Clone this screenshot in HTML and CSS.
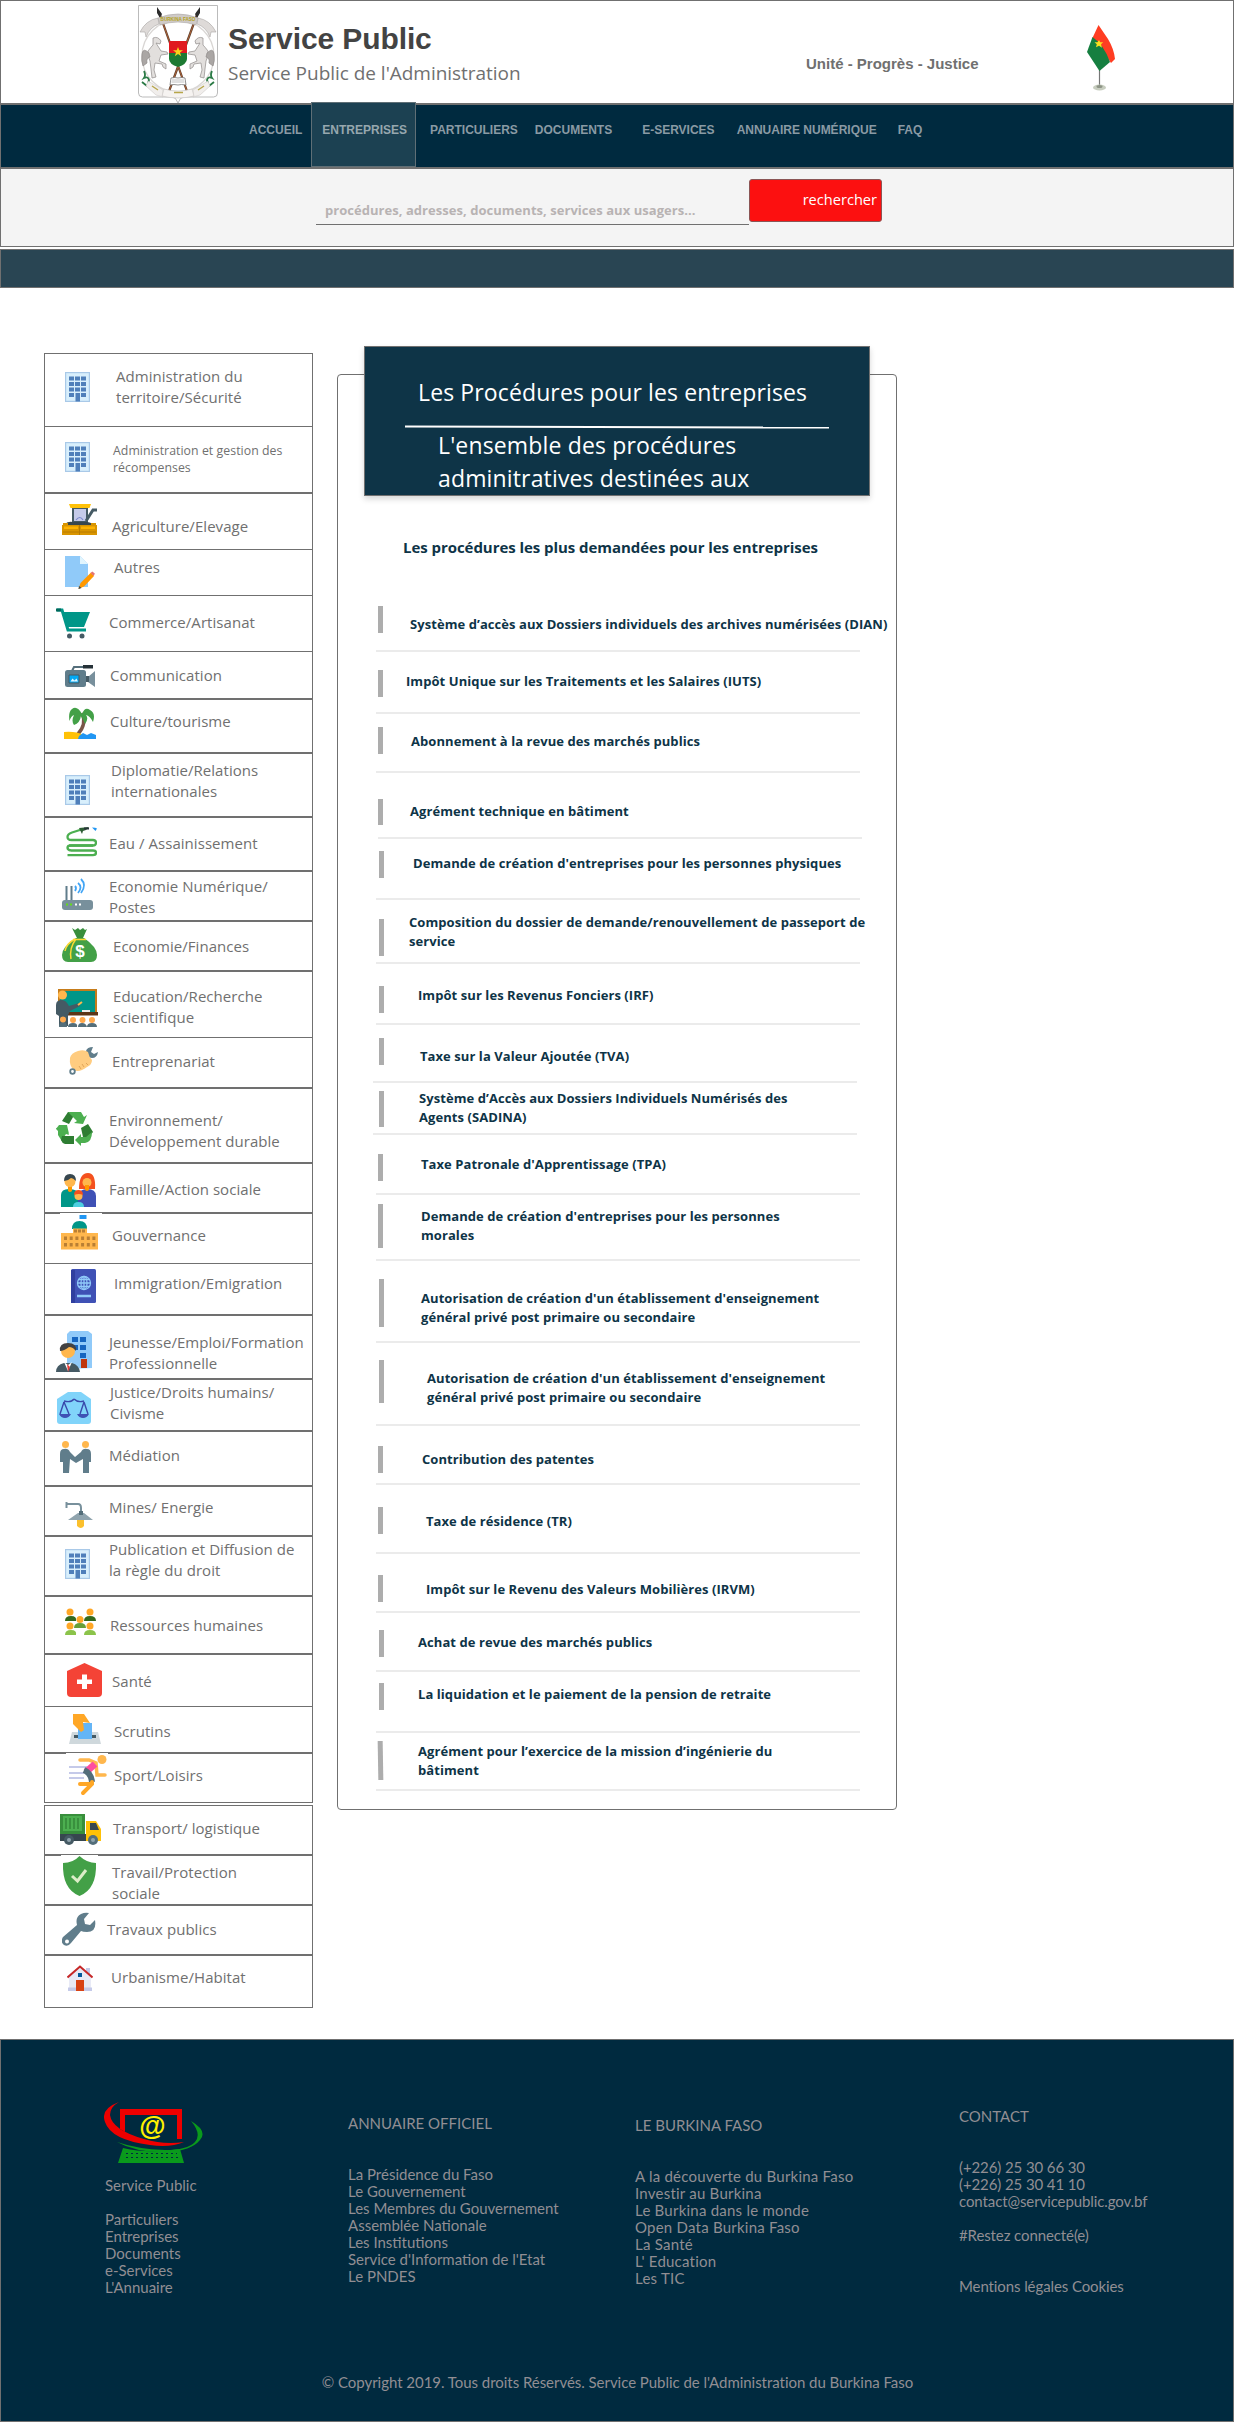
FILE: index.html
```html
<!DOCTYPE html>
<html lang="fr">
<head>
<meta charset="utf-8">
<title>Service Public - Les procédures pour les entreprises</title>
<link rel="stylesheet" href="styles.css">
</head>
<body>
<svg class="sprite" width="0" height="0" aria-hidden="true">
  <symbol id="building" viewBox="0 0 25 30">
    <path d="M0 0h25v30H0z" fill="#a9c9e8"/><path d="M1.2 1.2h22.6v27.6H1.2z" fill="#d8effc"/>
    <path d="M4 4.500h5v4H4zm6 0h5v4h-5zm6 0h5v4h-5zM4 10h5v4H4zm6 0h5v4h-5zm6 0h5v4h-5zM4 15.500h5v4H4zm6 0h5v4h-5zm6 0h5v4h-5zM4 21h5v4H4zm12 0h5v4h-5zM10.500 21h4.500v8.500h-4.500z" fill="#4f7fba"/>
  </symbol>
</svg>

<header class="masthead">
  <svg class="emblem" width="80" height="99" viewBox="0 0 80 99">
    <path d="M.5 .5h79V88q0 4-4 4H46q-4 0-6 6-2-6-6-6H4.500q-4 0-4-4z" fill="#fff" stroke="#a9a9a9" stroke-width=".8"/>
    <circle cx="40" cy="51" r="36" fill="none" stroke="#d9d6d4" stroke-width="1.200"/>
    <path d="M21 7 50 89M60 7 30 89" stroke="#5a3f2d" stroke-width="2.200"/>
    <path d="M21 7 50 89M60 7 30 89" stroke="#c2683a" stroke-width=".8"/>
    <path d="m19 2 5 7-2 4-3-5zM62 2l-5 7 2 4 3-5z" fill="#2c2c2c"/>
    <path d="M2 27q6-12 18-14l1 6Q12 22 8 32l-1-5zM78 27q-6-12-18-14l-1 6q9 3 13 13l1-5z" fill="#dedad8" stroke="#aaa6a4" stroke-width=".6"/>
    <path d="M20 13q20-8 40 0l-2 7q-18-6-36 0z" fill="#cfcac7" stroke="#aaa6a4" stroke-width=".6"/>
    <text class="motto" x="40" y="15.500">BURKINA FASO</text>
    <g id="horse" fill="#e2dfdd" stroke="#8f8b89" stroke-width=".7">
      <path d="M15 33q5-2 8 3l-1 3-4-1 5 8 6 1 1 2-7 1-2 6 7 3v5l-3-2-1-3-7-1-1 7 2 7-4 1-1-9-1-8q-3-5-2-10 3-4 5-6z"/>
      <path d="M11 48q-6-6-7 1t1 12l4-3q-1-5 3-6z" fill="#aaa6a4"/>
    </g>
    <use href="#horse" transform="matrix(-1 0 0 1 80 0)"/>
    <path d="M31 36h18v12H31z" fill="#e01a1f"/><path d="M31 48h18v6q0 5-9 8-9-3-9-8z" fill="#1d7a33"/>
    <path d="m40 42 1.300 3.200h3.700l-3 2.300 1.200 3.700-3.200-2.200-3.200 2.200 1.200-3.700-3-2.300h3.700z" fill="#f9d21b"/>
    <path d="M33 73q4-1 7 0 4-1 7 0l1 7q-5-1-8 0-4-1-8 0z" fill="#fff" stroke="#777" stroke-width=".8"/>
    <path d="M34 75h12M33.500 77h13" stroke="#999" stroke-width=".6"/>
    <path d="M6 66q2 4 0 7 4-2 5 2-2 4 1 8M4 77l5 4M74 66q-2 4 0 7-4-2-5 2 2 4-1 8M76 77l-5 4" fill="none" stroke="#2a7a45" stroke-width="1.800"/>
    <path d="m10 76 15 9v7l-7-2L8 81zM70 76l-15 9v7l7-2 10-9z" fill="#f1eeec" stroke="#c5c1bf" stroke-width=".5"/>
    <path d="M26 84q14 4 28 0l2 7q-16 4-32 0z" fill="#f6f3f1" stroke="#c5c1bf" stroke-width=".6"/>
    <path d="m14 81 6 4M36 87.500h9M66 81l-6 4" stroke="#b7a64a" stroke-width="1.400"/>
  </svg>
  <div class="identity">
    <h1>Service Public</h1>
    <p>Service Public de l'Administration</p>
  </div>
  <p class="devise">Unité - Progrès - Justice</p>
  <svg class="flag" width="30" height="68" viewBox="0 0 30 68">
    <path d="M13.500 44v18" stroke="#777" stroke-width="1.200"/><path d="M12.500 1 6 15q9 8 19 24l4-4q-1-10-7-20z" fill="#ff3d22"/>
    <path d="M6.500 13 1 28l12.500 19L24 38Q18 21 6.500 13z" fill="#157f40"/>
    <path d="m13 16 1.200 2.300h3l-2.200 2 1 3.500-3-2-3 1.500.8-3-2.300-2h3z" fill="#fbe01d"/>
    <ellipse cx="13.500" cy="63.500" rx="6.500" ry="3" fill="#c7cdbf"/><ellipse cx="13.500" cy="62.500" rx="3" ry="1.500" fill="#8d9486"/>
  </svg>
</header>

<nav class="menu">
  <a>ACCUEIL</a>
  <a class="active">ENTREPRISES</a>
  <a class="particuliers">PARTICULIERS</a>
  <a class="documents">DOCUMENTS</a>
  <a class="eservices">E-SERVICES</a>
  <a class="annuaire">ANNUAIRE NUMÉRIQUE</a>
  <a class="faq">FAQ</a>
</nav>

<section class="search">
  <div class="field">procédures, adresses, documents, services aux usagers...</div>
  <div class="submit">rechercher</div>
</section>
<div class="strip"></div>

<main>
  <aside>
    <ul class="cats">
      <li class="admin"><svg width="25" height="30"><use href="#building"/></svg><span>Administration du<br>territoire/Sécurité</span></li>
      <li class="awards thick"><svg width="25" height="30"><use href="#building"/></svg><span>Administration et gestion des<br>récompenses</span></li>
      <li class="farming"><svg width="35" height="31" viewBox="0 0 35 31"><path d="M11 4v14h14V4z" fill="#c5cae9" stroke="#455a64" stroke-width="2"/><path d="M7 0h22l-1.500 4h-19z" fill="#ffc107"/><path d="m24 17 7-11h4" fill="none" stroke="#455a64" stroke-width="3"/><path d="M3 20q3-3 8-2h13q6 0 8 4H3z" fill="#37474f"/><path d="M14 16q4-5 7 0" fill="none" stroke="#7986cb" stroke-width="1.200"/><path d="M1 19h5v4H1zM29 19h5v4h-5zM0 21h35v10H0z" fill="#d99500"/><path d="M2 22.500h14v2.500H2zm17 0h14v2.500H19z" fill="#ffb300"/><path d="M1 28h33M17.500 21v10" stroke="#b87b00" stroke-width="1"/></svg><span>Agriculture/Elevage</span></li>
      <li class="others"><svg width="32" height="34" viewBox="0 0 32 34"><path d="M1 1h15l8 8v23H1z" fill="#90caf9"/><path d="M16 1v8h8z" fill="#e1f5fe"/><path d="M27 17.500 30 21 20 31.500l-5.500 2.500 2-6z" fill="#ff9800"/><path d="m26.500 18 3.300 3 1-2.500-2.500-2z" fill="#e57373"/><path d="m15 31-.5 3 3-1z" fill="#37474f"/></svg><span>Autres</span></li>
      <li class="trade"><svg width="35" height="31" viewBox="0 0 35 31"><path d="M1 2h5l6 20h18" fill="none" stroke="#009688" stroke-width="3"/><path d="M7 4h27l-6 15H12z" fill="#009688"/><path d="M0 .5h5v3H0z" fill="#00695c"/><circle cx="13.500" cy="28" r="2.500" fill="#455a64"/><circle cx="26" cy="28" r="2.500" fill="#455a64"/></svg><span>Commerce/Artisanat</span></li>
      <li class="media thick"><svg width="30" height="22" viewBox="0 0 30 22"><path d="m7 6 2-4h12" fill="none" stroke="#546e7a" stroke-width="2"/><path d="M18 0h10v3.500H18z" fill="#263238"/><rect y="5" width="21" height="17" rx="2.500" fill="#607d8b"/><path d="M21 12h2l7-6v16l-7-5h-2z" fill="#78909c"/><path d="M21 11h3v6h-3z" fill="#455a64"/><path d="M4 10h10v8H4z" fill="#03a9f4" stroke="#455a64"/><path d="m5.500 16.500 2-3 2 2 2-2 1.500 3z" fill="#e1f5fe"/></svg><span>Communication</span></li>
      <li class="tourism thick"><svg width="32" height="32" viewBox="0 0 32 32"><path d="M14 27q9-10 4-21" fill="none" stroke="#795548" stroke-width="3.500"/><path d="M18 7Q13-2 8 2 4 5 5.500 14 7 9 10 8q-3 6 0 10 6-2 7-9 3 5 4 8 4-5 1-9 4 1 7 7 3-9-3-12-5-4-8 4z" fill="#43a047"/><path d="M0 25q12-1 19 3l2 4H0z" fill="#ffc107"/><path d="m15 29 4-3 4 2 4-2 5 2v4H14z" fill="#2196f3"/></svg><span>Culture/tourisme</span></li>
      <li class="diplomacy thick"><svg width="25" height="30"><use href="#building"/></svg><span>Diplomatie/Relations<br>internationales</span></li>
      <li class="water thick"><svg width="31" height="31" viewBox="0 0 31 31"><path d="M17 3 6 6.500Q1.500 8 1.500 11t4 3H27q3 0 3 2.700T27 19.500H5q-3.500 0-3.500 2.200T5 24.500" fill="none" stroke="#4caf50" stroke-width="2.300"/><path d="M3 19.500h24M5 24.500h22q3 0 3 2.300t-3 2.300H1.500" fill="none" stroke="#4caf50" stroke-width="2.300"/><path d="m13 2 10-1-3 3-3 1-1 3z" fill="#2e5d35"/><path d="M18 1.500h5v2h-5z" fill="#263238"/><path d="M26 1.500q4 0 5 1L29.500 5z" fill="#2196f3"/></svg><span>Eau / Assainissement</span></li>
      <li class="digital thick"><svg width="31" height="32" viewBox="0 0 31 32"><path d="M4.500 8v15M9.500 8v15" stroke="#607d8b" stroke-width="2"/><path d="M13 8q2 2 0 5M16 5q5 4 0 10M19 1q6 6 0 14" fill="none" stroke="#42a5f5" stroke-width="1.800"/><rect y="22" width="31" height="10" rx="3" fill="#78909c"/><path d="M4 26.500h2m2 0h2" stroke="#64dd17" stroke-width="2"/><path d="M13 26.500h2m2 0h2" stroke="#fff" stroke-width="2"/></svg><span>Economie Numérique/<br>Postes</span></li>
      <li class="finance thick"><svg width="35" height="34" viewBox="0 0 35 34"><path d="m10 0 3 2 3-2 2 2 3-2 2 2 2-1-4 9h-6z" fill="#388e3c"/><path d="M14 10h8q13 9 13 17 0 7-6 7H6q-6 0-6-7 0-8 14-17z" fill="#43a047"/><path d="M11 11.500h13M13 11Q4 16 3 23m11-12q-7 9-5 20" fill="none" stroke="#fdd835" stroke-width="1.500"/><text x="18" y="29" class="dollar">$</text></svg><span>Economie/Finances</span></li>
      <li class="school"><svg width="42" height="38" viewBox="0 0 42 38"><path d="M3 1h37v24H3z" fill="#009688" stroke="#c67c1a" stroke-width="2"/><path d="M10 23h32v3.500H10z" fill="#5d3517"/><path d="M26 21h8v2h-8z" fill="#eee"/><circle cx="6.500" cy="6" r="4.500" fill="#ffb74d"/><path d="M3 37V27l-3-2v-9q0-5 6-5 4 0 7 6l10-3 1 3-10 5-2 4v11z" fill="#455a64"/><path d="M22 16l4-3" stroke="#ffb74d" stroke-width="2"/><path d="M3 38q0-5 4-5t4 5zm9 0q0-4 5-4t4 4zm10 0q0-4 4-4t5 4zm9 0q0-4 5-4t5 4z" fill="#546e7a"/><g fill="#ffa94d"><circle cx="7" cy="30.500" r="3"/><circle cx="17" cy="31" r="3"/><circle cx="26.500" cy="31" r="3"/><circle cx="36" cy="31" r="3"/></g></svg><span>Education/Recherche<br>scientifique</span></li>
      <li class="business thick"><svg width="29" height="29" viewBox="0 0 29 29"><path d="m4 25 18-18" stroke="#607d8b" stroke-width="3"/><path d="M24 1q-6 0-7 4 0 7 6 7 5 0 6-6l-4 2-3-2z" fill="#607d8b"/><path d="M1 12q1-5 8-7 6-2 10 1 1 5 4 8 0 5-5 7-8 6-13 3-5-4-4-12z" fill="#ffcc80"/><path d="m10 20 2 3m1-5 2 3m2-4 2 2" stroke="#e0a458" stroke-width="1"/><circle cx="3.500" cy="25.500" r="2.300" fill="#fff" stroke="#607d8b" stroke-width="1.800"/></svg><span>Entreprenariat</span></li>
      <li class="green thick"><svg width="37" height="34" viewBox="0 0 37 34"><path d="M12 0h8l-7 12-7-3z" fill="#2e7d32"/><path d="M12 0h13l3 5 3-2-4 9-9-1 3-2z" fill="#4caf50"/><path d="m7 31-5-8 0-4-2-3 9-1 4 8-3-1-4 6z" fill="#4caf50"/><path d="M6 24h12v8H9q-3-1-4-4z" fill="#2e7d32"/><path d="m25 16 7-4 5 8-4 5h-6z" fill="#2e7d32"/><path d="M36 20q0 10-7 11h-4v3l-6-6 6-6v3h5z" fill="#4caf50"/><path d="M0 17l3-4 8 0 2 9-4-2-2 3z" fill="#4caf50"/></svg><span>Environnement/<br>Développement durable</span></li>
      <li class="family thick"><svg width="35" height="34" viewBox="0 0 35 34"><path d="M0 34V22q0-6 8-6 9 0 10 6v12z" fill="#009688"/><path d="M17 34V22q2-6 9-6 9 0 9 7v11z" fill="#3f51b5"/><path d="M18 16q0-16 9-16 8 0 7 16z" fill="#f4511e"/><circle cx="26" cy="9.500" r="4.500" fill="#ffb74d"/><path d="M24 12h4v5q-2 2-4 0zM7 12h4v6q-2 2-4 0z" fill="#ff9800"/><circle cx="9" cy="8.500" r="5.500" fill="#ffb74d"/><path d="M3 8q0-7 6-7t6 7q-3-3-5-3-3 3-7 3z" fill="#37474f"/><circle cx="17.500" cy="23" r="4" fill="#ffb74d"/><path d="M13 22q0-5 4.500-5t4.500 5q-4-2-9 0z" fill="#f4511e"/><path d="M12 34q0-5 5.500-5t5.500 5z" fill="#4dd0e1"/></svg><span>Famille/Action sociale</span></li>
      <li class="government"><svg width="42" height="37" viewBox="0 0 42 37"><path d="M0 0h42v37H0z" fill="#fff"/><path d="M19.500 2h7v4h-7z" fill="#2196f3"/><path d="M12 16q0-8 7.500-8t7.500 8z" fill="#009688"/><path d="M13 15.500h14V21H13zM1 20h37v16.500H1z" fill="#ffb74d"/><path d="M14 16.500h3v3h-3zm4 0h3v3h-3zm4 0h3v3h-3zM4 23.500h3v3.500H4zm5.700 0h3v3.500h-3zm5.700 0h3v3.500h-3zm5.700 0h3v3.500h-3zm5.700 0h3v3.500h-3zm5.600 0h3v3.500h-3zM4 30h3v3.500H4zm5.700 0h3v3.500h-3zm5.700 0h3v3.500h-3zm5.700 0h3v3.500h-3zm5.700 0h3v3.500h-3zm5.600 0h3v3.500h-3z" fill="#b97f34"/></svg><span>Gouvernance</span></li>
      <li class="migration thick"><svg width="25" height="34" viewBox="0 0 25 34"><rect width="25" height="34" rx="1.500" fill="#3f51b5"/><path d="M0 1h4v33H0z" fill="#303f9f"/><g fill="none" stroke="#90caf9" stroke-width="1.300"><circle cx="13" cy="14" r="6.500"/><ellipse cx="13" cy="14" rx="3" ry="6.500"/><path d="M6.500 14h13M13 7.500v13M7.500 10.500h11M7.500 17.500h11"/></g><path d="M6 27h14" stroke="#90caf9" stroke-width="2.500"/></svg><span>Immigration/Emigration</span></li>
      <li class="jobs thick"><svg width="36" height="41" viewBox="0 0 36 41"><path d="M11 38V3l3-3h18l4 3v34z" fill="#90caf9"/><path d="M16 6h6v5h-6zm8 0h6v5h-6zm-8 8h6v5h-6zm8 0h6v5h-6zm0 8h6v5h-6z" fill="#1565c0"/><path d="M25 28h6v9h-6z" fill="#bf360c"/><circle cx="12" cy="20" r="7" fill="#ffb74d"/><path d="M4 20q-1-8 8-8t8 8q-3-4-7-4-5 4-9 4z" fill="#424242"/><path d="M0 41q0-7 8-9h8q7 2 8 9z" fill="#455a64"/><path d="m8 31 4 9 4-9-4 3z" fill="#fff"/><path d="m11 33 1 8 2-5z" fill="#e53935"/></svg><span>Jeunesse/Emploi/Formation<br>Professionnelle</span></li>
      <li class="justice thick"><svg width="34" height="32" viewBox="0 0 34 32"><path d="M0 7 11 0h13l10 7v22q0 3-3 3H3q-3 0-3-3z" fill="#81d4fa"/><path d="M17 7q-3 4-10 2M17 7q4 4 10 2M7 10 3 22m4-12 5 12M27 10l-4 12m4-12 4 12" fill="none" stroke="#3949ab" stroke-width="1.400"/><path d="M2 22h12q-2 4-6 4t-6-4zm18 0h12q-2 4-6 4t-6-4z" fill="#3f51b5"/></svg><span>Justice/Droits humains/<br>Civisme</span></li>
      <li class="mediation thick"><svg width="31" height="32" viewBox="0 0 31 32"><circle cx="5.500" cy="3.500" r="3.500" fill="#ffb74d"/><circle cx="25.500" cy="3.500" r="3.500" fill="#ffb74d"/><path d="M0 21v-8q0-5 4-5 4-1 6 3l5 5 6-5q2-4 6-3 4 0 4 5v8h-2v11h-6V18l-7 4-6-4-1 14H3V21z" fill="#607d8b"/></svg><span>Médiation</span></li>
      <li class="energy thick"><svg width="28" height="27" viewBox="0 0 28 27"><path d="M1.500 0v6M1 2h12q3 0 3 4v5" fill="none" stroke="#78909c" stroke-width="2"/><path d="M13 11h6l9 7H3z" fill="#90a4ae"/><path d="M14 9h4v4h-4z" fill="#546e7a"/><path d="M12 18h7v6q-3 4-7 0z" fill="#fbc02d"/></svg><span>Mines/ Energie</span></li>
      <li class="publishing thick"><svg width="25" height="30"><use href="#building"/></svg><span>Publication et Diffusion de<br>la règle du droit</span></li>
      <li class="staff thick"><svg width="32" height="28" viewBox="0 0 32 28"><path d="M1 13q0-5 6-5t5 5zM20 13q0-5 6-5t6 5z" fill="#33691e"/><path d="M10 20q0-5 6-5t6 5z" fill="#689f38"/><path d="M1 27q0-5 6-5t5 5zM20 27q0-5 6-5t6 5z" fill="#8bc34a"/><g fill="#ffa726"><circle cx="6" cy="4" r="3.500"/><circle cx="26" cy="4" r="3.500"/><circle cx="16" cy="11.500" r="3.500"/><circle cx="6" cy="18" r="3.500"/><circle cx="26" cy="18" r="3.500"/></g></svg><span>Ressources humaines</span></li>
      <li class="health"><svg width="35" height="34" viewBox="0 0 35 34"><path d="M0 8 17.500 0 35 8v22q0 4-4 4H4q-4 0-4-4z" fill="#f44336"/><path d="M15 11.500h5v5h5v4.500h-5v5h-5v-5h-5v-4.500h5z" fill="#fff"/></svg><span>Santé</span></li>
      <li class="voting thick"><svg width="32" height="30" viewBox="0 0 32 30"><path d="M3 18h26l3 12H0z" fill="#cfd8dc"/><path d="M5 21h22v3H5z" fill="#455a64"/><path d="M9 9h14v16H9z" fill="#64b5f6"/><path d="M4 0h11l6 9-7-1 1 8-3 2-8-8z" fill="#ffa726"/></svg><span>Scrutins</span></li>
      <li class="sport"><svg width="42" height="43" viewBox="0 0 42 43"><path d="M0 0h42v43H0z" fill="#fff"/><path d="M3 14h18M3 20h15M3 25h15" stroke="#c5cae9" stroke-width="1.800"/><path d="M14 7h9l7 3 1 12h8" fill="none" stroke="#ffb74d" stroke-width="3.500" stroke-linecap="round"/><circle cx="36" cy="6.500" r="4.500" fill="#ffb74d"/><path d="m20 19 9-8" stroke="#ff4da0" stroke-width="7"/><path d="M18 17q7 3 8 12" fill="none" stroke="#546e7a" stroke-width="6"/><path d="M26 29v2l-9 9m8-9H14" fill="none" stroke="#ffa726" stroke-width="4" stroke-linecap="round"/></svg><span>Sport/Loisirs</span></li>
    </ul>
    <ul class="cats">
      <li class="transport thick"><svg width="42" height="33" viewBox="0 0 42 33"><path d="M0 22h28v7H0z" fill="#37474f"/><path d="M0 2h25v20H0z" fill="#388e3c"/><path d="M3 4h19v15H3z" fill="#4caf50"/><path d="M6 6v11m4-11v11m4-11v11m4-11v11" stroke="#2e7d32" stroke-width="1.200"/><path d="M26 29V9h10l5 8v12z" fill="#ffc107"/><path d="M30 11h6l3 7h-9z" fill="#37474f"/><circle cx="9" cy="28" r="5" fill="#455a64"/><circle cx="9" cy="28" r="2" fill="#90a4ae"/><circle cx="33" cy="28" r="5" fill="#546e7a"/><circle cx="33" cy="28" r="2" fill="#90a4ae"/></svg><span>Transport/ logistique</span></li>
      <li class="labour thick"><svg width="37" height="41" viewBox="0 0 37 41"><path d="M0 0h37v41H0z" fill="#fff"/><path d="M2 8q10 0 16.500-7Q26 8 35 8q1 26-16.500 33Q1 34 2 8z" fill="#43a047"/><path d="m11 21 5.500 5L25 15" fill="none" stroke="#dcedc8" stroke-width="3"/></svg><span>Travail/Protection<br>sociale</span></li>
      <li class="works thick"><svg width="34" height="34" viewBox="0 0 34 34"><path d="M27 1 22 7l1 5 5 1 5-5q2 12-8 12-4 0-6-1L9 31q-3 4-7 2-4-3-1-8l14-12Q13 5 19 2q4-2 8-1z" fill="#607d8b"/><circle cx="5" cy="29.500" r="2" fill="#fff"/></svg><span>Travaux publics</span></li>
      <li class="housing"><svg width="26" height="26" viewBox="0 0 26 26"><path d="M19 3h4v8h-4z" fill="#c5cae9"/><path d="M2 12 13 2l11 10v14H2z" fill="#e8eaf6"/><path d="M1 22.500h24V26H1z" fill="#c5cae9"/><path d="m.5 12.500 12.500-11 12.500 11" fill="none" stroke="#c62828" stroke-width="2"/><path d="M11 8h4v4h-4z" fill="#01579b"/><path d="M9 15h8v11H9z" fill="#d84315"/></svg><span>Urbanisme/Habitat</span></li>
    </ul>
  </aside>

  <section class="card">
    <div class="banner">
      <h2>Les Procédures pour les entreprises</h2>
      <div class="rule"></div>
      <p>L'ensemble des procédures<br>adminitratives destinées aux</p>
    </div>
    <h3>Les procédures les plus demandées pour les entreprises</h3>
    <ul class="procs">
      <li class="dian"><i></i><span>Système d’accès aux Dossiers individuels des archives numérisées (DIAN)</span></li>
      <li class="iuts"><i></i><span>Impôt Unique sur les Traitements et les Salaires (IUTS)</span></li>
      <li class="revue"><i></i><span>Abonnement à la revue des marchés publics</span></li>
      <li class="agrement"><i></i><span>Agrément technique en bâtiment</span></li>
      <li class="physiques"><i></i><span>Demande de création d'entreprises pour les personnes physiques</span></li>
      <li class="passeport"><i></i><span>Composition du dossier de demande/renouvellement de passeport de<br>service</span></li>
      <li class="irf"><i></i><span>Impôt sur les Revenus Fonciers (IRF)</span></li>
      <li class="tva"><i></i><span>Taxe sur la Valeur Ajoutée (TVA)</span></li>
      <li class="sadina"><i></i><span>Système d’Accès aux Dossiers Individuels Numérisés des<br>Agents (SADINA)</span></li>
      <li class="tpa"><i></i><span>Taxe Patronale d'Apprentissage (TPA)</span></li>
      <li class="morales"><i></i><span>Demande de création d'entreprises pour les personnes<br>morales</span></li>
      <li class="prive"><i></i><span>Autorisation de création d'un établissement d'enseignement<br>général privé post primaire ou secondaire</span></li>
      <li class="secondaire"><i></i><span>Autorisation de création d'un établissement d'enseignement<br>général privé post primaire ou secondaire</span></li>
      <li class="patentes"><i></i><span>Contribution des patentes</span></li>
      <li class="residence"><i></i><span>Taxe de résidence (TR)</span></li>
      <li class="irvm"><i></i><span>Impôt sur le Revenu des Valeurs Mobilières (IRVM)</span></li>
      <li class="achat"><i></i><span>Achat de revue des marchés publics</span></li>
      <li class="retraite"><i></i><span>La liquidation et le paiement de la pension de retraite</span></li>
      <li class="ingenierie"><i></i><span>Agrément pour l’exercice de la mission d’ingénierie du<br>bâtiment</span></li>
    </ul>
  </section>
</main>

<footer>
  <div class="columns">
    <div class="brand">
      <svg class="logo" width="99" height="62" viewBox="0 0 99 62">
        <path d="M16 8h62v30h-5V14H21v17l-5-3z" fill="#ee0000"/>
        <path d="M15 1Q-4 8 1 21q6 18 45 23 20 3 34-3-20 3-40-3Q8 29 6 14 6 6 15 1z" fill="#ee0000"/>
        <path d="M87 20q11 13 4 21-8 8-30 8-28-1-48-8 20 11 50 10 24-1 33-12 8-9-9-19z" fill="#0a9a1c"/>
        <path d="M19 47q25 6 57 1l4 14H14z" fill="#0a9a1c"/>
        <path d="M22 52.500h51M22 56.500h52" stroke="#002a3f" stroke-width="1.200" stroke-dasharray="2 3"/>
        <text x="48.500" y="34">@</text>
      </svg>
      <p>Service Public</p>
      <p><br>Particuliers<br>Entreprises<br>Documents<br>e-Services<br>L'Annuaire</p>
    </div>
    <div class="directory">
      <h4>ANNUAIRE OFFICIEL</h4>
      <p>La Présidence du Faso<br>Le Gouvernement<br>Les Membres du Gouvernement<br>Assemblée Nationale<br>Les Institutions<br>Service d'Information de l'Etat<br>Le PNDES</p>
    </div>
    <div class="country">
      <h4>LE BURKINA FASO</h4>
      <p>A la découverte du Burkina Faso<br>Investir au Burkina<br>Le Burkina dans le monde<br>Open Data Burkina Faso<br>La Santé<br>L' Education<br>Les TIC</p>
    </div>
    <div class="contact">
      <h4>CONTACT</h4>
      <p>(+226) 25 30 66 30<br>(+226) 25 30 41 10<br>contact@servicepublic.gov.bf<br><br>#Restez connecté(e)<br><br><br>Mentions légales Cookies</p>
    </div>
  </div>
  <p class="copyright">© Copyright 2019. Tous droits Réservés. Service Public de l'Administration du Burkina Faso</p>
</footer>
</body>
</html>
```
FILE: styles.css
```css
* { box-sizing: border-box; }
body { margin: 0; background: #fff; color: #707070; font: 15px/21px "Open Sans", "Noto Sans", sans-serif; }
h1, h2, h3, h4, p, ul { margin: 0; padding: 0; font-weight: normal; }
ul { list-style: none; }
svg { display: block; flex: none; }
.sprite { position: absolute; }

/* Header */
.masthead { display: flex; align-items: flex-start; height: 104px; border: 1px solid #707070; }
.emblem { margin: 4px 0 0 137px; }
.motto { font: bold 4.6px "Liberation Sans", sans-serif; fill: #b3a21d; text-anchor: middle; }
.identity { width: 578px; margin: 21px 0 0 10px; }
.identity h1 { font: bold 30px/34px "Liberation Sans", Arial, sans-serif; letter-spacing: -.1px; color: #434343; }
.identity p { margin-top: 4px; font-size: 19px; line-height: 26px; letter-spacing: -.03px; }
.devise { width: 280px; margin-top: 54px; font: bold 15px/17px "Liberation Sans", Arial, sans-serif; }
.flag { margin-top: 23px; }

.menu { position: relative; display: flex; align-items: flex-start; height: 64px; padding-left: 248px; border: 1px solid #707070; background: #002a3f; }
.menu a { padding-top: 18px; font: bold 12px/14px "Liberation Sans", Arial, sans-serif; color: #8a9aa4; white-space: nowrap; }
.menu .active { height: 65px; margin: -3px 0 0 9px; padding: 20px 8px 0 10px; border: 1px solid #5f6f76; background: #1c4152; color: #97a7ae; }
.menu .particuliers { margin-left: 14px; }
.menu .documents { margin-left: 17px; }
.menu .eservices { margin-left: 30px; }
.menu .annuaire { margin-left: 22px; }
.menu .faq { margin-left: 21px; }

/* Search */
.search { display: flex; align-items: flex-start; height: 79px; padding-left: 315px; border: 1px solid #707070; background: #f4f4f4; }
.field { width: 433px; height: 56px; padding: 31px 0 0 9px; border-bottom: 1px solid #707070; font-weight: bold; font-size: 13px; letter-spacing: .04px; color: #b8b3b3; }
.submit { width: 133px; height: 43px; margin-top: 10px; padding: 9px 4px 0 0; border: 1px solid #8b5555; border-radius: 3px; background: #fc1010; color: #fff; font-size: 14.6px; text-align: right; }
.strip { height: 39px; margin-top: 2px; border: 1px solid #707070; background: #294553; }

/* Page body */
main { display: flex; align-items: flex-start; height: 1751px; padding: 65px 0 0 44px; }
aside { width: 269px; margin-right: 24px; }
.cats { margin-bottom: 2px; border: 1px solid #707070; border-bottom: 0; }
.cats li { display: grid; grid-template-columns: var(--tx) 1fr; height: var(--h); border-bottom: 1px solid #707070; }
.cats .thick { border-bottom-width: 2px; }
.cats svg { margin: var(--iy) 0 0 var(--ix); }
.cats span { margin-top: var(--ty); letter-spacing: .05px; white-space: nowrap; }
.dollar { font: bold 17px "Liberation Sans", sans-serif; fill: #fff; text-anchor: middle; }

.admin { --h: 73px; --ix: 20px; --iy: 18px; --tx: 71px; --ty: 12px; }
.awards { --h: 67px; --ix: 20px; --iy: 15px; --tx: 68px; --ty: 15px; font-size: 12.3px; line-height: 17px; }
.farming { --h: 56px; --ix: 17px; --iy: 10px; --tx: 67px; --ty: 22px; }
.others { --h: 46px; --ix: 19px; --iy: 5px; --tx: 69px; --ty: 7px; }
.trade { --h: 56px; --ix: 11px; --iy: 12px; --tx: 64px; --ty: 16px; }
.media { --h: 48px; --ix: 20px; --iy: 13px; --tx: 65px; --ty: 13px; }
.tourism { --h: 54px; --ix: 19px; --iy: 7px; --tx: 65px; --ty: 11px; }
.diplomacy { --h: 64px; --ix: 20px; --iy: 21px; --tx: 66px; --ty: 6px; }
.water { --h: 54px; --ix: 21px; --iy: 8px; --tx: 64px; --ty: 15px; }
.digital { --h: 50px; --ix: 17px; --iy: 6px; --tx: 64px; --ty: 4px; }
.finance { --h: 50px; --ix: 17px; --iy: 6px; --tx: 68px; --ty: 14px; }
.school { --h: 66px; --ix: 11px; --iy: 17px; --tx: 68px; --ty: 14px; }
.business { --h: 51px; --ix: 24px; --iy: 8px; --tx: 67px; --ty: 13px; }
.green { --h: 75px; --ix: 11px; --iy: 23px; --tx: 64px; --ty: 21px; }
.family { --h: 50px; --ix: 16px; --iy: 9px; --tx: 64px; --ty: 15px; }
.government { --h: 50px; --ix: 15px; --iy: -1px; --tx: 67px; --ty: 11px; }
.migration { --h: 52px; --ix: 26px; --iy: 5px; --tx: 69px; --ty: 9px; }
.jobs { --h: 64px; --ix: 11px; --iy: 15px; --tx: 64px; --ty: 16px; }
.justice { --h: 52px; --ix: 12px; --iy: 12px; --tx: 65px; --ty: 2px; }
.mediation { --h: 55px; --ix: 15px; --iy: 9px; --tx: 64px; --ty: 13px; }
.energy { --h: 50px; --ix: 20px; --iy: 15px; --tx: 64px; --ty: 10px; }
.publishing { --h: 60px; --ix: 20px; --iy: 12px; --tx: 64px; --ty: 2px; }
.staff { --h: 58px; --ix: 19px; --iy: 11px; --tx: 65px; --ty: 18px; }
.health { --h: 52px; --ix: 22px; --iy: 8px; --tx: 67px; --ty: 16px; }
.voting { --h: 47px; --ix: 24px; --iy: 7px; --tx: 69px; --ty: 14px; }
.sport { --h: 49px; --ix: 21px; --iy: -1px; --tx: 69px; --ty: 11px; }
.transport { --h: 50px; --ix: 15px; --iy: 6px; --tx: 68px; --ty: 12px; }
.labour { --h: 50px; --ix: 16px; --iy: -1px; --tx: 67px; --ty: 6px; }
.works { --h: 50px; --ix: 17px; --iy: 6px; --tx: 62px; --ty: 13px; }
.housing { --h: 52px; --ix: 22px; --iy: 9px; --tx: 66px; --ty: 11px; }

/* Procedures card */
.card { width: 560px; margin-top: 21px; padding-bottom: 18px; border: 1px solid #707070; border-radius: 4px; color: #0e3447; }
.banner { width: 506px; height: 150px; margin: -29px 0 0 26px; padding-top: 29px; border: 1px solid #707070; background: #0e3447; box-shadow: 0 3px 6px rgba(0, 0, 0, .16); color: #fff; font-size: 23px; line-height: 33px; }
.banner h2 { margin-left: 53px; font-size: 23px; letter-spacing: .12px; }
.rule { width: 424px; height: 2px; margin: 17px 0 1px 40px; background: #fff; transform: rotate(.15deg); }
.banner p { margin-left: 73px; letter-spacing: .15px; }
.card h3 { margin: 41px 0 0 65px; font-size: 15px; line-height: 20px; font-weight: bold; letter-spacing: -.05px; }
.procs { margin-left: 38px; font-size: 13px; line-height: 19px; font-weight: bold; letter-spacing: .07px; }
.procs li { display: grid; grid-template-columns: var(--tx) 1fr; width: 484px; height: var(--h); border-bottom: 2px solid #ebebeb; }
.procs i { width: 5px; height: var(--bh); margin: var(--by) 0 0 var(--bx, 2px); background: #adadad; }
.procs span { margin-top: var(--ty); white-space: nowrap; }

.dian { --h: 95px; --by: 49px; --bh: 27px; --tx: 34px; --ty: 58px; }
.iuts { --h: 62px; --by: 18px; --bh: 27px; --tx: 30px; --ty: 20px; }
.revue { --h: 59px; --by: 13px; --bh: 27px; --tx: 35px; --ty: 18px; }
.procs .agrement { --h: 66px; --by: 26px; --bh: 26px; --tx: 32px; --ty: 29px; --bx: 0px; margin-left: 2px; }
.physiques { --h: 61px; --by: 12px; --bh: 27px; --tx: 37px; --ty: 15px; --bx: 3px; }
.passeport { --h: 64px; --by: 19px; --bh: 37px; --tx: 33px; --ty: 13px; --bx: 3px; }
.irf { --h: 61px; --by: 22px; --bh: 27px; --tx: 42px; --ty: 22px; --bx: 3px; }
.procs .tva { --h: 58px; --by: 13px; --bh: 27px; --tx: 47px; --ty: 22px; --bx: 6px; margin-left: -3px; }
.procs .sadina { --h: 52px; --by: 8px; --bh: 36px; --tx: 46px; --ty: 6px; --bx: 6px; margin-left: -3px; }
.tpa { --h: 60px; --by: 19px; --bh: 27px; --tx: 45px; --ty: 20px; }
.morales { --h: 66px; --by: 9px; --bh: 44px; --tx: 45px; --ty: 12px; }
.prive { --h: 82px; --by: 18px; --bh: 48px; --tx: 45px; --ty: 28px; --bx: 3px; }
.secondaire { --h: 83px; --by: 17px; --bh: 43px; --tx: 51px; --ty: 26px; --bx: 3px; }
.patentes { --h: 59px; --by: 20px; --bh: 27px; --tx: 46px; --ty: 24px; }
.residence { --h: 69px; --by: 22px; --bh: 27px; --tx: 50px; --ty: 27px; }
.irvm { --h: 59px; --by: 21px; --bh: 27px; --tx: 50px; --ty: 26px; }
.achat { --h: 59px; --by: 17px; --bh: 27px; --tx: 42px; --ty: 20px; --bx: 3px; }
.retraite { --h: 61px; --by: 11px; --bh: 27px; --tx: 42px; --ty: 13px; --bx: 3px; }
.ingenierie { --h: 58px; --by: 8px; --bh: 39px; --tx: 42px; --ty: 9px; }
.ingenierie i { transform: rotate(-1deg); }

/* Footer */
footer { height: 383px; border: 1px solid #707070; background: #002a3f; color: #918e93; font: 15px/17px Lato, sans-serif; }
.columns { display: grid; grid-template-columns: 244px 287px 324px 1fr; height: 334px; padding-left: 103px; }
.columns h4 { margin-bottom: 34px; font-size: 15px; }
.brand { padding-top: 61px; }
.logo { margin-bottom: 14px; }
.logo text { font: bold 27px "Liberation Sans", sans-serif; fill: #fff200; text-anchor: middle; }
.brand p { padding-left: 1px; }
.directory { padding-top: 75px; }
.country { padding-top: 77px; }
.country p { letter-spacing: .23px; }
.contact { padding-top: 68px; }
.contact p { letter-spacing: -.1px; }
.copyright { padding-left: 1px; text-align: center; letter-spacing: -.04px; }
```
